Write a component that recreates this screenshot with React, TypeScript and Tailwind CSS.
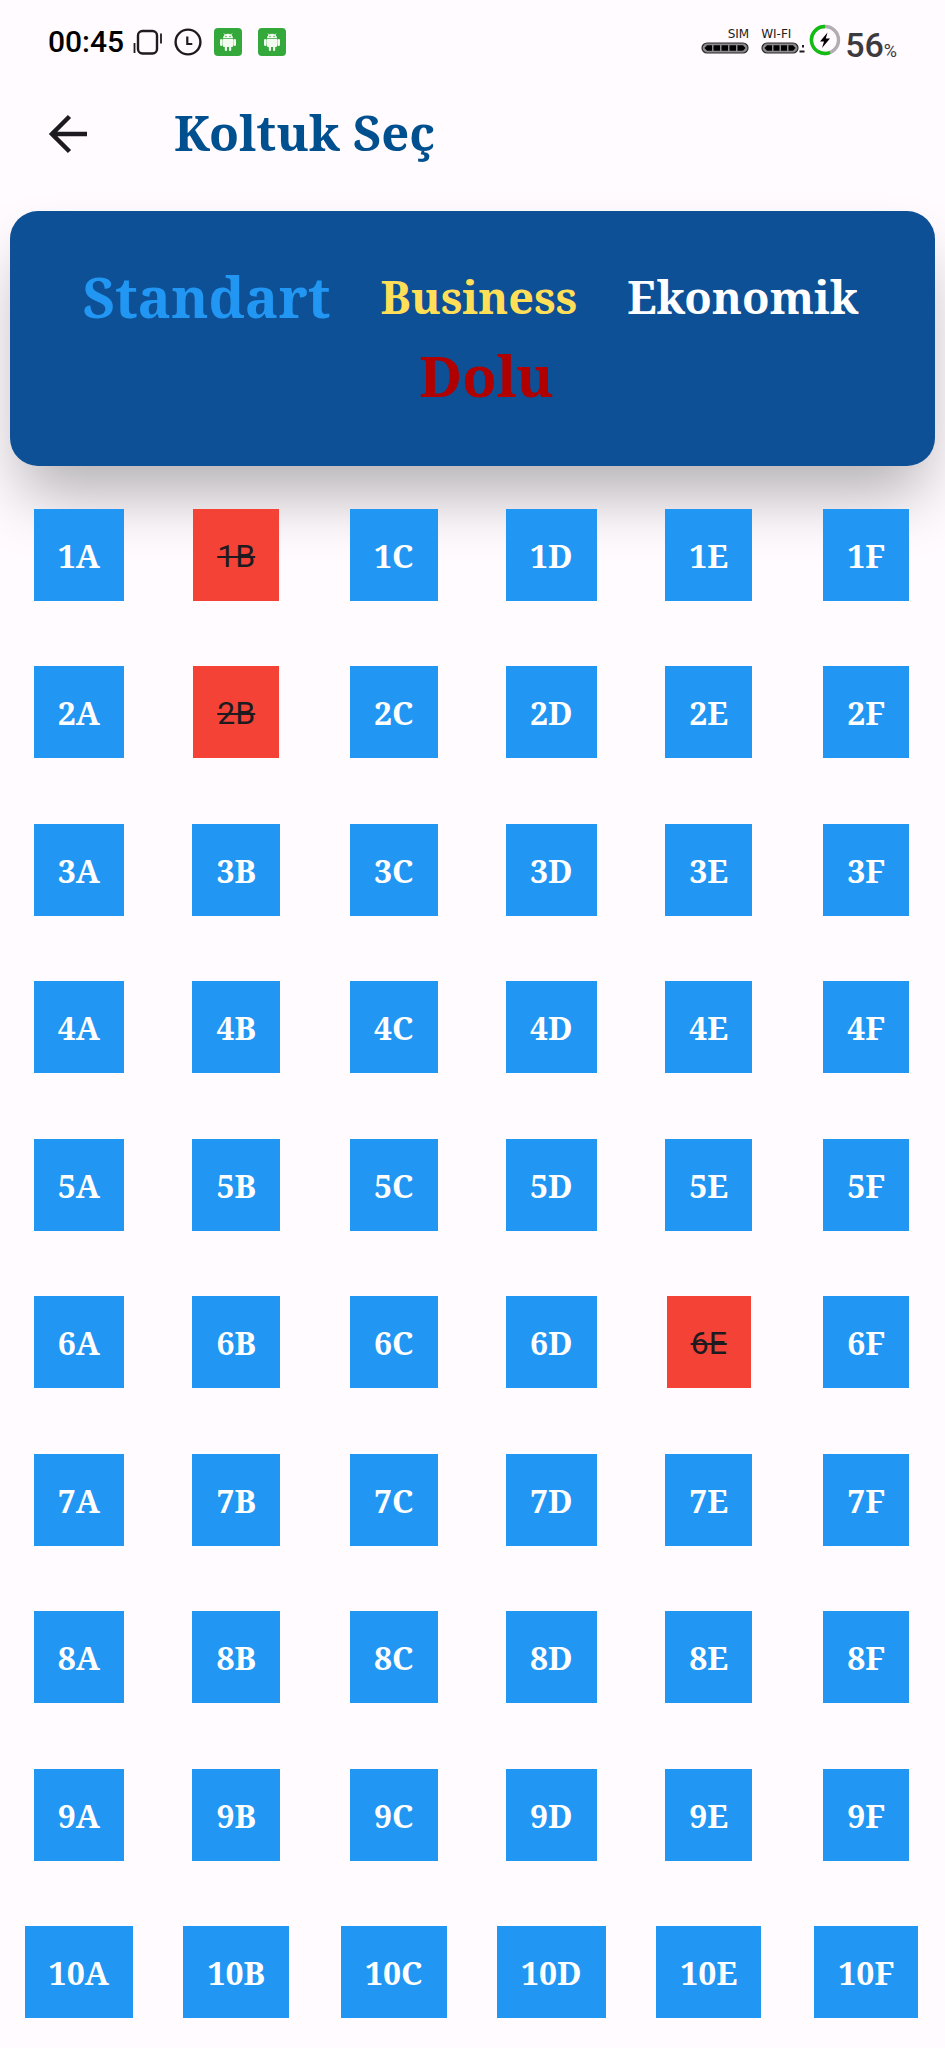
const COLUMNS = ["A", "B", "C", "D", "E", "F"];
const ROWS = [1, 2, 3, 4, 5, 6, 7, 8, 9, 10];
const TAKEN = new Set(["1B", "2B", "6E"]);

function VibrateIcon() {
  return (
    <svg className="h-7 w-8" viewBox="0 0 32 28" fill="none" stroke="#1d1b20" aria-hidden="true">
      <rect x="6" y="3" width="19" height="22.5" rx="4.5" strokeWidth="2.4" />
      <path d="M2.5 15v10M29 5.500v10" strokeWidth="1.800" />
    </svg>
  );
}

function ClockIcon() {
  return (
    <svg className="h-7 w-7" viewBox="0 0 28 28" fill="none" stroke="#1d1b20" aria-hidden="true">
      <circle cx="14" cy="14" r="12.400" strokeWidth="2.400" />
      <path d="M13.300 8.500v7.500h5" strokeWidth="2.200" />
    </svg>
  );
}

function AndroidIcon() {
  return (
    <svg className="h-7 w-7" viewBox="0 0 28 28" aria-hidden="true">
      <rect width="28" height="28" rx="4" fill="#34a83a" />
      <g fill="#f3faf0">
        <path d="M9 10.300a5 4.600 0 0 1 10 0z" />
        <path d="M10 5.500l2 2.500M18 5.500l-2 2.500" stroke="#f3faf0" strokeWidth="0.900" />
        <path d="M8.800 11h10.400v6.500a1.500 1.500 0 0 1-1.500 1.500h-7.400a1.500 1.500 0 0 1-1.500-1.500z" />
        <rect x="6" y="11" width="2.600" height="7" rx="1.300" />
        <rect x="19.400" y="11" width="2.600" height="7" rx="1.300" />
        <rect x="10.800" y="18" width="2.200" height="5" rx="1" />
        <rect x="15" y="18" width="2.200" height="5" rx="1" />
      </g>
      <circle cx="12" cy="8.500" r="0.700" fill="#34a83a" />
      <circle cx="16" cy="8.500" r="0.700" fill="#34a83a" />
    </svg>
  );
}

function SimMeter() {
  return (
    <svg className="h-3 w-12" viewBox="0 0 48 12" aria-hidden="true">
      <rect x="1" y="1" width="46" height="10" rx="5" fill="#8c8a8e" stroke="#2a292c" strokeWidth="1.200" />
      <path d="M6 3.200h5v5.600H6L3.500 6zM12.500 3.200h6.500v5.600h-6.500zM20.500 3.200h6.500v5.600h-6.500zM28.500 3.200h6.500v5.600h-6.500zM36.500 3.200h5.500L44.500 6 42 8.800h-5.500z" fill="#000" />
    </svg>
  );
}

function WifiMeter() {
  return (
    <svg className="h-3 w-11" viewBox="0 0 44 12" aria-hidden="true">
      <rect x="1" y="1" width="36" height="10" rx="5" fill="#8c8a8e" stroke="#2a292c" strokeWidth="1.200" />
      <path d="M6 3.200h5v5.600H6L3.500 6zM12.500 3.200h6v5.600h-6zM20 3.200h6v5.600h-6zM27.500 3.200h4.500L34.500 6 32 8.800h-4.500z" fill="#000" />
      <path d="M41 3h2v2.500h-2zM38.500 8.500h5v2h-5z" fill="#1d1b20" />
    </svg>
  );
}

function ChargeRing() {
  return (
    <svg className="h-8 w-8" viewBox="0 0 32 32" fill="none" aria-hidden="true">
      <circle cx="16" cy="16" r="13.500" stroke="#b0aeb2" strokeWidth="3.400" />
      <path d="M16 2.500a13.500 13.500 0 1 0 5 26" stroke="#12bd12" strokeWidth="3.400" />
      <path d="M18.500 8.500L11 17.500h4L13 24l8-9.500h-4.200z" fill="#000" />
    </svg>
  );
}

function StatusBar() {
  return (
    <div className="flex h-20 shrink-0 items-center justify-between pt-1 pl-12 pr-12 font-[Roboto,sans-serif] text-[#1d1b20]">
      <div className="flex items-center">
        <span className="text-[30px] leading-8 font-medium text-black">00:45</span>
        <span className="ml-2 flex items-center gap-3">
          <span className="flex gap-[10px]">
            <VibrateIcon />
            <ClockIcon />
          </span>
          <span className="flex gap-4">
            <AndroidIcon />
            <AndroidIcon />
          </span>
        </span>
      </div>
      <div className="flex items-center">
        <div className="flex flex-col items-end pb-1 font-['DejaVu_Sans',sans-serif] text-[12px] leading-4">
          <span>SIM</span>
          <SimMeter />
        </div>
        <div className="ml-3 flex flex-col items-start pb-1 font-['DejaVu_Sans',sans-serif] text-[12px] leading-4">
          <span>WI-FI</span>
          <WifiMeter />
        </div>
        <span className="ml-1 pb-1">
          <ChargeRing />
        </span>
        <span className="ml-1 pt-3 text-[34px] leading-8 text-[#3c3a3e]">
          <span className="font-medium">56</span>
          <span className="text-[18px]">%</span>
        </span>
      </div>
    </div>
  );
}

function Seat({ id }: { id: string }) {
  const taken = TAKEN.has(id);
  return (
    <button
      type="button"
      disabled={taken}
      className={
        taken
          ? "h-[92px] bg-[#f44336] px-6 pt-[2px] font-[Roboto,sans-serif] text-[32px] text-[#1d1b20] line-through decoration-2"
          : "h-[92px] cursor-pointer bg-[#2196f3] px-6 pt-[2px] text-[32px] font-bold text-white"
      }
    >
      {id}
    </button>
  );
}

export default function App() {
  return (
    <div className="flex h-screen flex-col overflow-hidden bg-[#fffbff] font-['Noto_Serif',serif]">
      <StatusBar />
      <header className="flex h-[107px] shrink-0 items-center px-12">
        <button type="button" aria-label="Geri" className="cursor-pointer">
          <svg className="h-10 w-10" viewBox="0 0 40 40" fill="none" stroke="#1d1b20" strokeWidth="4.500" aria-hidden="true">
            <path d="M39 20H4M21.500 2.500L4 20l17.500 17.500" />
          </svg>
        </button>
        <h1 className="ml-[86px] pb-1 text-[49px] leading-[60px] font-bold text-[#00508f]">Koltuk Seç</h1>
      </header>
      <section className="mx-[10px] mt-6 flex h-[255px] shrink-0 flex-wrap content-center items-center justify-center gap-x-[50px] rounded-[28px] bg-[#0d5096] pr-6 pb-[6px] pl-5 font-bold shadow-[0_38px_64px_-10px_rgba(0,0,0,0.3)]">
        <span className="text-[56px] leading-[79px] text-[#2196f3]">Standart</span>
        <span className="text-[45px] leading-[79px] text-[#ffdf58]">Business</span>
        <span className="text-[45px] leading-[79px] text-white">Ekonomik</span>
        <span className="pl-8 text-[56px] leading-[79px] text-[#b00000]">Dolu</span>
      </section>
      <main className="relative min-h-0 flex-1 overflow-y-auto pt-[10px] [scrollbar-width:none]">
        <div className="grid grid-cols-6">
          {ROWS.flatMap((row) =>
            COLUMNS.map((column) => (
              <div key={`${row}${column}`} className="flex aspect-square items-center justify-center">
                <Seat id={`${row}${column}`} />
              </div>
            )),
          )}
        </div>
      </main>
    </div>
  );
}
